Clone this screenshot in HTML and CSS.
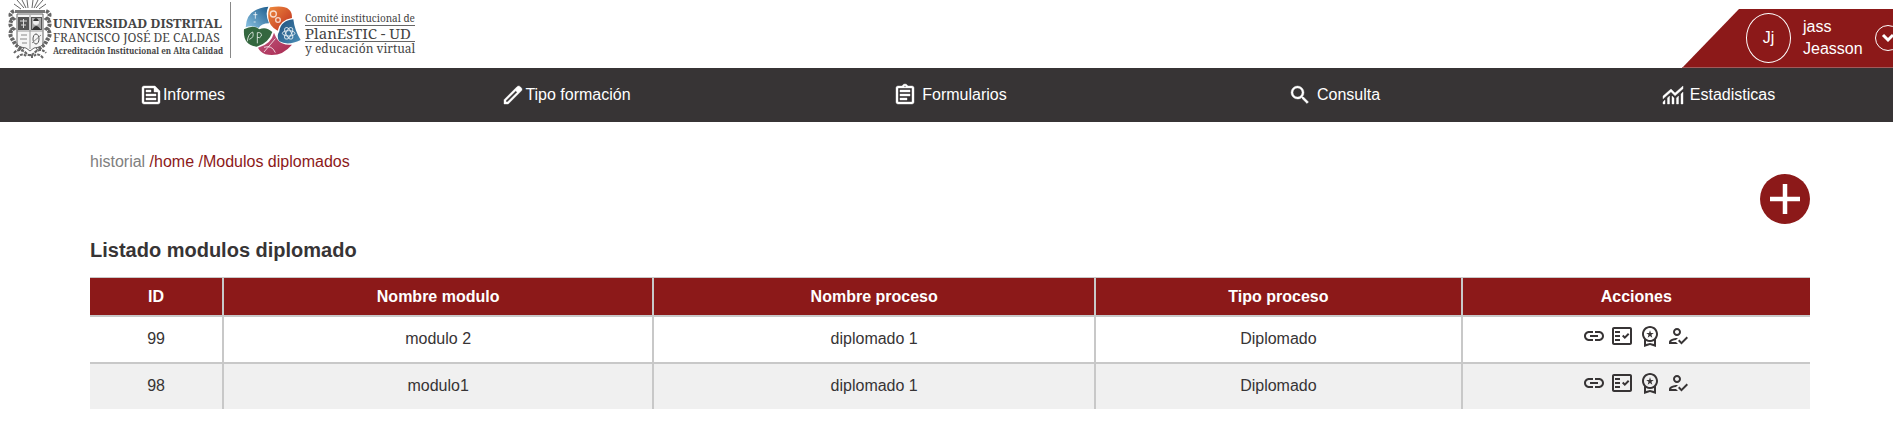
FILE: index.html
```html
<!DOCTYPE html>
<html lang="es">
<head>
<meta charset="utf-8">
<meta name="viewport" content="width=device-width, initial-scale=1">
<title>Modulos diplomados</title>
<link rel="stylesheet" href="styles.css">
</head>
<body>
<svg class="sprite" aria-hidden="true">
  <symbol id="i-feed" viewBox="0 0 24 24"><path d="M16 3H5c-1.1 0-2 .9-2 2v14c0 1.1.9 2 2 2h14c1.1 0 2-.9 2-2V8l-5-5zm3 16H5V5h10v4h4v10zM7 17h10v-2H7v2zm5-10H7v2h5V7zm-5 6h10v-2H7v2z"/></symbol>
  <symbol id="i-edit" viewBox="0 0 24 24"><path d="M5 19h1.425L16.2 9.225 14.775 7.8 5 17.575V19Zm-2 2v-4.25L16.2 3.575q.3-.275.663-.425.362-.15.762-.15t.775.15q.375.15.65.45L20.425 5q.3.275.438.65.137.375.137.75 0 .4-.137.763-.138.362-.438.662L7.25 21Z"/></symbol>
  <symbol id="i-assignment" viewBox="0 0 24 24"><path d="M7 15h7v2H7zm0-4h10v2H7zm0-4h10v2H7z"/><path d="M19 3h-4.18C14.4 1.84 13.3 1 12 1s-2.4.84-2.82 2H5c-1.1 0-2 .9-2 2v14c0 1.1.9 2 2 2h14c1.1 0 2-.9 2-2V5c0-1.1-.9-2-2-2zm-7-.25c.41 0 .75.34.75.75s-.34.75-.75.75-.75-.34-.75-.75.34-.75.75-.75zM19 19H5V5h14v14z"/></symbol>
  <symbol id="i-search" viewBox="0 0 24 24"><path d="M15.5 14h-.79l-.28-.27A6.471 6.471 0 0 0 16 9.5 6.5 6.5 0 1 0 9.5 16c1.61 0 3.09-.59 4.23-1.57l.27.28v.79l5 4.99L20.49 19l-4.99-5zm-6 0C7.01 14 5 11.99 5 9.5S7.01 5 9.5 5 14 7.01 14 9.5 11.99 14 9.5 14z"/></symbol>
  <symbol id="i-stats" viewBox="0 0 24 24"><path d="M2 21v-2l2-2v4zm4.500 0v-6l2-2v8zm4.500 0v-8l2 2.025V21zm4.500 0v-5.975l2-2V21zm4.500 0V11l2-2v12zM2 15.825V13l8-7 4 4 8-7v2.825l-8 7-4-4z"/></symbol>
  <symbol id="i-link" viewBox="0 0 24 24"><path d="M17 7h-4v2h4c1.650 0 3 1.350 3 3s-1.350 3-3 3h-4v2h4c2.760 0 5-2.240 5-5s-2.240-5-5-5zm-6 8H7c-1.650 0-3-1.350-3-3s1.350-3 3-3h4V7H7c-2.760 0-5 2.240-5 5s2.240 5 5 5h4v-2zm-3-4h8v2H8z"/></symbol>
  <symbol id="i-check" viewBox="0 0 24 24"><path d="M20 3H4c-1.100 0-2 .9-2 2v14c0 1.100.9 2 2 2h16c1.100 0 2-.9 2-2V5c0-1.100-.9-2-2-2zm0 16H4V5h16v14z"/><path d="M19.410 10.420 17.990 9l-3.170 3.170-1.410-1.420L12 12.160 14.820 15zM5 7h5v2H5zM5 11h5v2H5zM5 15h5v2H5z"/></symbol>
  <symbol id="i-award" viewBox="0 0 24 24"><path d="M9.680 13.690 12 11.930l2.310 1.760-.88-2.850L15.750 9h-2.840L12 6.190 11.090 9H8.250l2.310 1.840-.88 2.850zM20 10c0-4.420-3.580-8-8-8s-8 3.580-8 8c0 2.030.76 3.870 2 5.280V23l6-2 6 2v-7.720c1.240-1.410 2-3.250 2-5.280zm-8-6c3.310 0 6 2.690 6 6s-2.690 6-6 6-6-2.690-6-6 2.690-6 6-6zm0 15-4 1.020v-3.100c1.180.68 2.540 1.080 4 1.080s2.820-.4 4-1.080v3.100L12 19z"/></symbol>
  <symbol id="i-person" viewBox="0 0 24 24"><path d="M11 12c2.210 0 4-1.790 4-4s-1.790-4-4-4-4 1.790-4 4 1.790 4 4 4zm0-6c1.100 0 2 .9 2 2s-.9 2-2 2-2-.9-2-2 .9-2 2-2zM5 18c.2-.63 2.570-1.680 4.960-1.940l2.040-2c-.39-.04-.68-.06-1-.06-2.670 0-8 1.340-8 4v2h9l-2-2H5zM20.600 12.500l-5.130 5.170-2.070-2.080L12 17l3.470 3.500L22 13.910z"/></symbol>
</svg>

<header class="top">
  <div class="brand">
    <svg class="seal" viewBox="0 0 44 62" aria-hidden="true">
      <g stroke="#666" fill="none">
        <path d="M9 0l7 8M14 0l4 8M19 0l1 8M25 0l-1 8M30 0l-4 8M35 0l-7 8M6 4l7 5M38 4l-7 5"/>
        <path d="M6 11c-5 2-4 6-1 8-4 3-3 8 0 10-4 3-3 8 0 11l2 4 4 3 4 3M38 11c5 2 4 6 1 8 4 3 3 8 0 10 4 3 3 8 0 11l-2 4-4 3-4 3" stroke-width="4" stroke-dasharray="3 1"/>
        <path d="M6 53c4-5 9-3 12 0s5 3 8 0 8-5 12 0M9 58q5-6 9-2M35 58q-5-6-9-2M20 55h4v4" stroke-width="2" stroke-dasharray="3 1"/>
      </g>
      <path d="M7 10h30v3H7z" fill="#777"/>
      <path d="M9 14h26v29q0 4-9 5l-4 3-4-3q-9-1-9-5z" fill="#f6f6f6" stroke="#666"/>
      <path d="M10 17h11v13H10zM23 17h11v13H23z" fill="#555"/>
      <path d="M22 15v34M9 31h26" stroke="#999"/>
      <path d="M24 18h9v11h-9z" fill="#aaa"/>
      <circle cx="28" cy="22" r="3" fill="#eee"/><path d="M25 21q3-6 6 0zM24 30q4-8 9 0z" fill="#333"/>
      <path d="M12 21h7M13 25h5M15.500 19v9" stroke="#ddd"/>
      <ellipse cx="28" cy="39" rx="3" ry="5" fill="none" stroke="#555"/><path d="M24 43l9-8M13 35h6M12 39h7M14 43h5" stroke="#888"/>
    </svg>
    <div class="uni">
      <strong>UNIVERSIDAD DISTRITAL</strong>
      <span class="uni-name">FRANCISCO JOSÉ DE CALDAS</span>
      <span class="uni-note">Acreditación Institucional en Alta Calidad</span>
    </div>
    <span class="divider"></span>
    <svg class="swirl" viewBox="0 0 192 180" aria-hidden="true">
      <defs>
        <linearGradient id="g-sky" x1="0" y1="1" x2="1" y2="0"><stop offset="0" stop-color="#8cc4e4"/><stop offset="1" stop-color="#1d5c8c"/></linearGradient>
        <linearGradient id="g-fire" x1="0" y1="0" x2="1" y2="1"><stop offset="0" stop-color="#ee8a3c"/><stop offset="1" stop-color="#bd2c20"/></linearGradient>
        <linearGradient id="g-sea" x1="0" y1="0" x2="1" y2="1"><stop offset="0" stop-color="#1f4f7c"/><stop offset="1" stop-color="#4b8fb8"/></linearGradient>
        <linearGradient id="g-rose" x1="0" y1="0" x2="1" y2="1"><stop offset="0" stop-color="#c05a80"/><stop offset="1" stop-color="#a8284f"/></linearGradient>
      </defs>
      <path d="M23 82Q25 26 91 20Q80 42 93 70Q70 70 62 84Q40 74 23 82z" fill="url(#g-sky)"/>
      <path d="M96 22Q164 10 162 54Q126 60 119 92Q94 80 91 54Q89 34 96 22z" fill="url(#g-fire)"/>
      <path d="M124 94Q128 62 166 58Q170 92 188 120Q150 138 124 124Q114 110 124 94z" fill="url(#g-sea)"/>
      <path d="M60 143Q100 132 108 98Q118 124 132 130Q146 136 162 134Q128 174 82 163Q66 155 60 143z" fill="url(#g-rose)"/>
      <path d="M18 88Q46 72 64 88Q84 78 103 96Q92 130 56 140Q14 136 18 88z" fill="#34673f"/>
      <g fill="none" stroke="#fff" stroke-opacity=".75" stroke-width="3">
        <circle cx="106" cy="42" r="9" stroke-width="4"/><circle cx="120" cy="60" r="7" stroke-width="4"/>
        <ellipse cx="152" cy="100" rx="19" ry="8"/><ellipse cx="152" cy="100" rx="19" ry="8" transform="rotate(60 152 100)"/><ellipse cx="152" cy="100" rx="19" ry="8" transform="rotate(120 152 100)"/>
        <path d="M52 36v20M46 44h12M47 66h6M28 124q2-22 16-28 6 16-10 22M58 130V98q14-2 12 10-4 8-12 4M78 156l34-40M78 142q24-8 34 16"/>
      </g>
    </svg>
    <div class="comite">
      <span class="comite-top">Comité institucional de</span>
      <span class="comite-main">PlanEsTIC - UD</span>
      <span class="comite-sub">y educación virtual</span>
    </div>
  </div>
  <div class="user">
    <span class="avatar">Jj</span>
    <span class="user-name">jass<br>Jeasson</span>
    <button class="user-toggle" type="button" aria-label="Menú de usuario"><svg viewBox="0 0 24 24" aria-hidden="true"><path d="M7 9l5 5 5-5" fill="none" stroke="#fff" stroke-width="3"/></svg></button>
  </div>
</header>

<nav class="menu">
  <a href="#"><svg class="icon"><use href="#i-feed"/></svg>Informes</a>
  <a href="#"><svg class="icon"><use href="#i-edit"/></svg>Tipo formación</a>
  <a href="#" class="spaced"><svg class="icon"><use href="#i-assignment"/></svg>Formularios</a>
  <a href="#" class="spaced"><svg class="icon"><use href="#i-search"/></svg>Consulta</a>
  <a href="#" class="spaced"><svg class="icon"><use href="#i-stats"/></svg>Estadisticas</a>
</nav>

<main class="content">
  <div class="crumbs">historial <a href="#">/home</a> <a href="#">/Modulos diplomados</a></div>
  <button class="add" type="button" aria-label="Agregar"><svg viewBox="0 0 50 50" aria-hidden="true"><path d="M25 10v30M10 25h30" stroke="#fff" stroke-width="4.500"/></svg></button>
  <h1>Listado modulos diplomado</h1>
  <table class="modules">
    <thead>
      <tr><th class="c-id">ID</th><th class="c-name">Nombre modulo</th><th class="c-process">Nombre proceso</th><th class="c-type">Tipo proceso</th><th>Acciones</th></tr>
    </thead>
    <tbody>
      <tr>
        <td>99</td><td>modulo 2</td><td>diplomado 1</td><td>Diplomado</td>
        <td><div class="actions">
          <button type="button" aria-label="Enlace"><svg class="icon"><use href="#i-link"/></svg></button>
          <button type="button" aria-label="Lista"><svg class="icon"><use href="#i-check"/></svg></button>
          <button type="button" aria-label="Certificado"><svg class="icon"><use href="#i-award"/></svg></button>
          <button type="button" aria-label="Inscritos"><svg class="icon"><use href="#i-person"/></svg></button>
        </div></td>
      </tr>
      <tr>
        <td>98</td><td>modulo1</td><td>diplomado 1</td><td>Diplomado</td>
        <td><div class="actions">
          <button type="button" aria-label="Enlace"><svg class="icon"><use href="#i-link"/></svg></button>
          <button type="button" aria-label="Lista"><svg class="icon"><use href="#i-check"/></svg></button>
          <button type="button" aria-label="Certificado"><svg class="icon"><use href="#i-award"/></svg></button>
          <button type="button" aria-label="Inscritos"><svg class="icon"><use href="#i-person"/></svg></button>
        </div></td>
      </tr>
    </tbody>
  </table>
</main>
</body>
</html>
```
FILE: styles.css
```css
* { box-sizing: border-box; }
body {
  margin: 0;
  font: 16px/22px "Liberation Sans", Arial, sans-serif;
  color: #373435;
  background: #fff;
  overflow-x: hidden;
}
a { color: inherit; text-decoration: none; }
button { margin: 0; padding: 0; border: 0; background: none; color: inherit; font: inherit; }
.sprite { position: absolute; width: 0; height: 0; }
.icon { display: block; width: 24px; height: 24px; fill: currentColor; flex: none; }

.top { display: flex; justify-content: space-between; align-items: flex-end; height: 68px; overflow: hidden; }
.brand { display: flex; align-items: flex-start; height: 100%; padding-left: 8px; font-family: "Noto Serif", "Liberation Serif", serif; color: #444; }
.seal { width: 44px; height: 62px; flex: none; }
.uni { display: flex; flex-direction: column; width: 170px; padding: 16px 0 0 1px; white-space: nowrap; }
.uni strong { font-size: 13px; line-height: 15px; }
.uni-name { font-size: 12px; line-height: 14px; }
.uni-note { font-size: 8px; line-height: 12px; font-weight: 700; }
.divider { width: 1px; height: 56px; margin: 2px 7px 0 8px; background: #888; }
.swirl { width: 64px; height: 60px; flex: none; }
.comite { display: flex; flex-direction: column; padding: 12px 0 0 3px; white-space: nowrap; }
.comite-top { font-size: 10px; line-height: 13px; }
.comite-main { font-size: 15px; line-height: 15px; border-top: 1px solid #666; border-bottom: 1px solid #666; }
.comite-sub { font-size: 12px; line-height: 13px; }

.user {
  display: flex; align-items: center; flex: none; width: 211px; height: 59px; padding-left: 64px;
  color: #fff; background: #8c1919; border-bottom: 1px solid #a25a5a;
  clip-path: polygon(57px 0, 100% 0, 100% 100%, 0 100%);
}
.avatar { display: flex; align-items: center; justify-content: center; flex: none; width: 45px; height: 50px; margin-right: 12px; border: 1px solid #fff; border-radius: 50%; }
.user-name { flex: none; width: 72px; }
.user-toggle { flex: none; width: 26px; height: 26px; border: 1px solid #fff; border-radius: 50%; }
.user-toggle svg { display: block; width: 24px; height: 24px; }

.menu { display: grid; grid-template-columns: repeat(5, 130px); justify-content: space-between; align-items: center; height: 54px; padding: 0 110px 1px 117px; color: #fff; background: #373435; }
.menu a { display: flex; align-items: center; justify-content: center; white-space: nowrap; }
.menu .spaced { gap: 5px; }
.menu .icon { stroke: currentColor; stroke-width: .4px; }

.content { display: flex; flex-direction: column; padding: 29px 83px 30px 90px; }
.crumbs { color: #808080; }
.crumbs a { color: #8c1919; }
.add { align-self: flex-end; width: 50px; height: 50px; margin: 1px 0 14px; border-radius: 50%; background: #8c1919; }
.add svg { display: block; width: 50px; height: 50px; }
h1 { margin: 0 0 15px; font-size: 20px; line-height: 24px; }
.modules { width: 100%; table-layout: fixed; border-spacing: 0; border-top: 1px solid #c8c8c8; text-align: center; }
.modules th, .modules td { padding: 0; border: solid #c8c8c8; border-width: 0 2px 2px 0; }
.modules th { height: 39px; color: #fff; background: #8c1919; }
.modules td { height: 47px; padding-bottom: 2px; }
.modules th:last-child, .modules td:last-child { border-right: 0; }
.modules tr:last-child td { height: 45px; border-bottom: 0; background: #f0f0f0; }
.c-id { width: 7.8%; }
.c-name { width: 25%; }
.c-process { width: 25.7%; }
.c-type { width: 21.3%; }
.actions { display: flex; justify-content: center; gap: 4px; padding-bottom: 6px; }
```
